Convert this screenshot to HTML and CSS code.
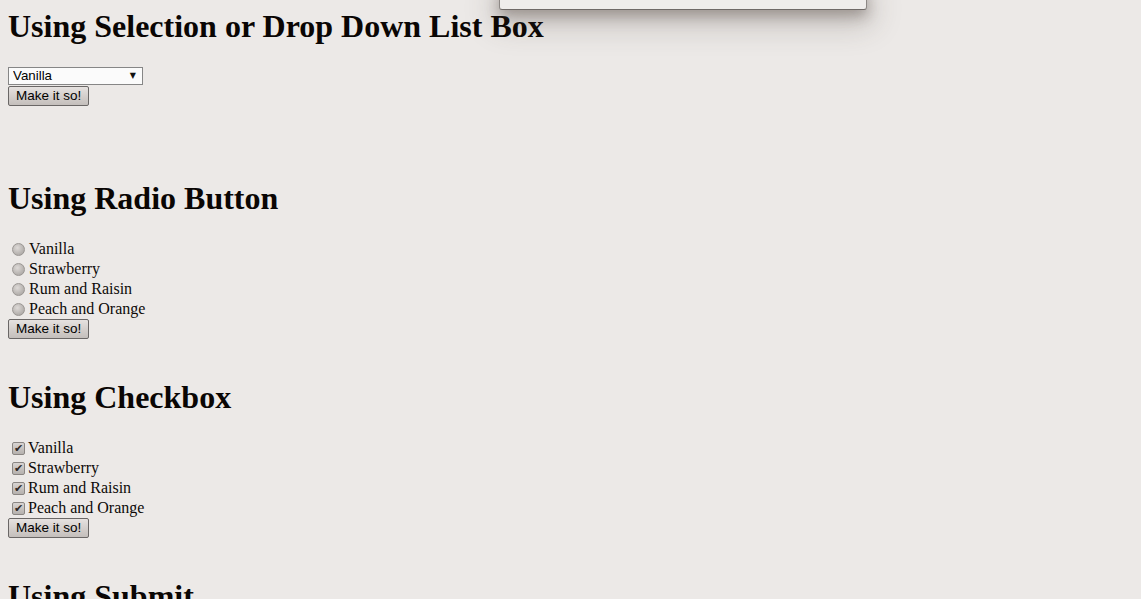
FILE: index.html
```html
<!DOCTYPE html>
<html lang="en">
<head>
<meta charset="utf-8">
<title>Forms</title>
<link rel="stylesheet" href="styles.css">
</head>
<body>
<div class="popup"></div>

<h1 class="title">Using Selection or Drop Down List Box</h1>
<form class="demo demo-first">
  <span class="select-wrap">
    <select class="select">
      <option>Vanilla</option>
      <option>Strawberry</option>
      <option>Rum and Raisin</option>
      <option>Peach and Orange</option>
    </select>
  </span>
  <button type="button" class="btn">Make it so!</button>
</form>

<h1 class="title">Using Radio Button</h1>
<form class="demo">
  <label class="opt"><input type="radio" name="flavour" class="radio">Vanilla</label>
  <label class="opt"><input type="radio" name="flavour" class="radio">Strawberry</label>
  <label class="opt"><input type="radio" name="flavour" class="radio">Rum and Raisin</label>
  <label class="opt"><input type="radio" name="flavour" class="radio">Peach and Orange</label>
  <button type="button" class="btn">Make it so!</button>
</form>

<h1 class="title">Using Checkbox</h1>
<form class="demo">
  <label class="opt"><input type="checkbox" class="check" checked>Vanilla</label>
  <label class="opt"><input type="checkbox" class="check" checked>Strawberry</label>
  <label class="opt"><input type="checkbox" class="check" checked>Rum and Raisin</label>
  <label class="opt"><input type="checkbox" class="check" checked>Peach and Orange</label>
  <button type="button" class="btn">Make it so!</button>
</form>

<h1 class="title">Using Submit</h1>
<form class="demo">
  <button type="submit" class="btn">Make it so!</button>
</form>
</body>
</html>
```
FILE: styles.css
```css
html, body {
  background: #ece9e7;
}
body {
  margin: 0 8px;
  padding-top: 8px;
  font-family: "Liberation Serif", "Times New Roman", serif;
  font-size: 16px;
  color: #000;
  min-height: 100vh;
}

.popup {
  position: fixed;
  left: 499px;
  top: -12px;
  width: 366px;
  height: 20px;
  background: #efedeb;
  border: 1px solid #8d8885;
  border-bottom-color: #6f6a67;
  border-radius: 0 0 3px 3px;
  box-shadow: 0 6px 14px rgba(70, 58, 52, 0.38), 0 10px 30px 6px rgba(70, 58, 52, 0.22);
}

.title {
  font-size: 32px;
  line-height: 37px;
  font-weight: bold;
  margin: 0 0 22px;
  color: #0a0604;
}

.demo {
  display: flex;
  flex-direction: column;
  align-items: flex-start;
  margin: 0 0 40px;
}
.demo-first {
  margin-bottom: 74px;
  gap: 1px;
}

.select-wrap {
  position: relative;
  display: block;
}
.select {
  appearance: none;
  -webkit-appearance: none;
  display: block;
  width: 135px;
  height: 18px;
  margin: 0;
  padding: 0 0 0 4px;
  border: 1px solid #868686;
  border-radius: 0;
  background: #fbfbfb;
  font-family: "Liberation Sans", Arial, sans-serif;
  font-size: 13.33px;
  line-height: 16px;
  color: #000;
}
.select-wrap::after {
  content: "\25BC";
  position: absolute;
  right: 7px;
  top: 4px;
  font-family: "DejaVu Sans", sans-serif;
  font-size: 8px;
  line-height: 10px;
  color: #111;
  pointer-events: none;
}

.btn {
  height: 20px;
  margin: 0;
  padding: 0 7px 0 7px;
  border: 1px solid #6a6766;
  border-radius: 2px;
  background: linear-gradient(#e6e2e0, #d3cecb 55%, #c4bfbc);
  font-family: "Liberation Sans", Arial, sans-serif;
  font-size: 13.5px;
  line-height: 18px;
  color: #000;
}

.opt {
  display: flex;
  align-items: center;
  height: 20px;
  line-height: 20px;
  color: #0d0907;
}

.radio {
  appearance: none;
  -webkit-appearance: none;
  width: 13px;
  height: 13px;
  margin: 0 4px 0 4px;
  border: 1px solid #9a9693;
  border-radius: 50%;
  background: radial-gradient(circle at 40% 35%, #dedad8 0%, #bcb8b5 55%, #a29e9b 100%);
  flex: none;
}

.check {
  appearance: none;
  -webkit-appearance: none;
  width: 13px;
  height: 13px;
  margin: 0 3px 0 4px;
  border: 1px solid #8a8683;
  border-radius: 2px;
  background: linear-gradient(#d8d4d2, #b5b1ae);
  display: grid;
  place-items: center;
  flex: none;
}
.check:checked::after {
  content: "\2714";
  font-family: "DejaVu Sans", sans-serif;
  font-size: 11px;
  line-height: 11px;
  color: #2f2a27;
}
```
